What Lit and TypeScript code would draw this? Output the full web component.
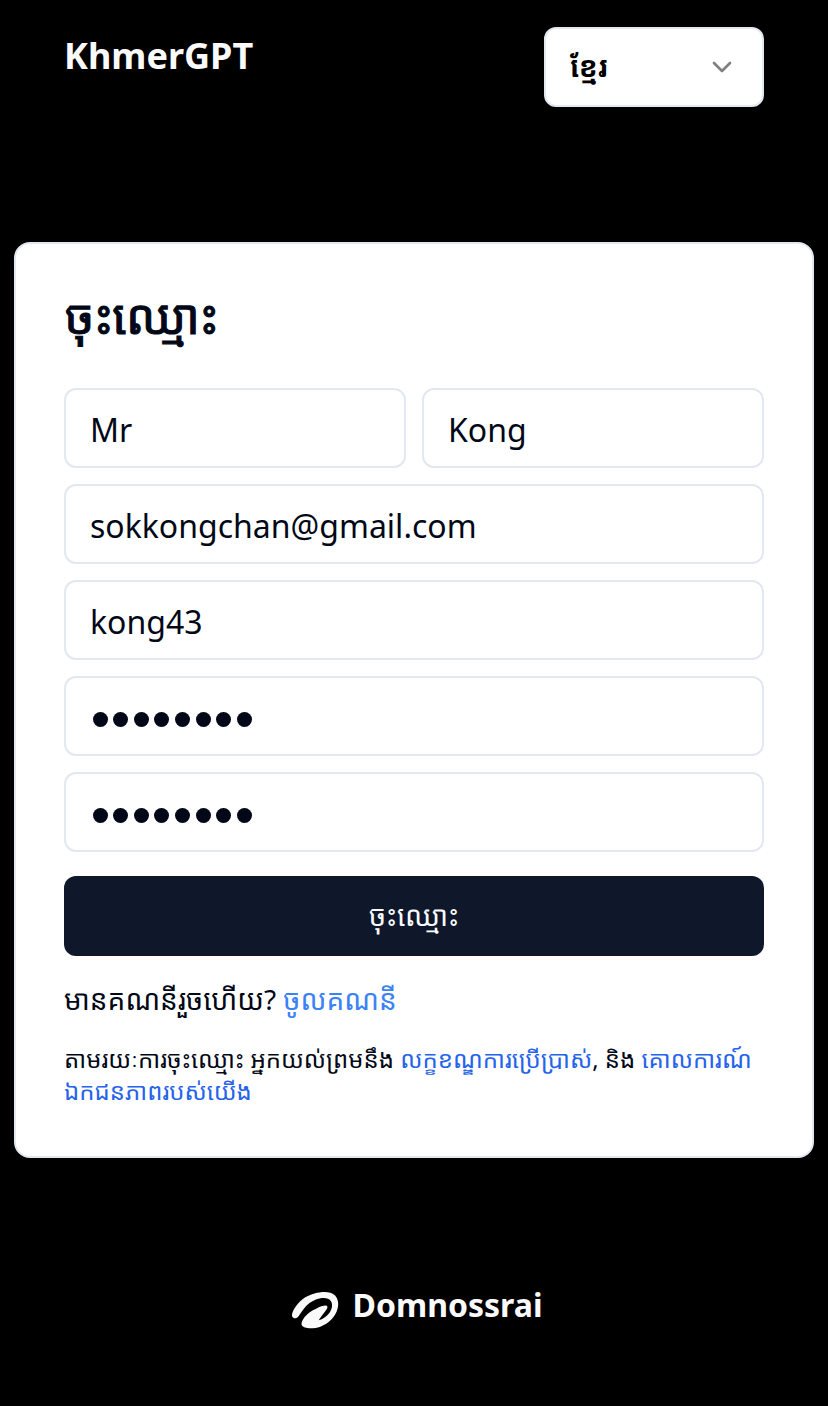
import { LitElement, html, css } from "lit";
import { customElement } from "lit/decorators.js";

@customElement("app-root")
export class AppRoot extends LitElement {
  static styles = css`
    :host { display: block; min-height: 1406px; background: #000; color: #020817; font-family: "Noto Sans", "Noto Sans Khmer", sans-serif; }
    * { box-sizing: border-box; }
    .page { height: 1406px; display: flex; flex-direction: column; padding: 27px 14px 0; }
    .top { display: flex; justify-content: space-between; padding: 0 50px; height: 80px; }
    .brand { color: #fafafa; font-weight: 700; font-size: 36px; line-height: 58px; }
    .select { width: 220px; height: 80px; border: 2px solid #e2e8f0; border-radius: 12px; background: #fff; display: flex; align-items: center; justify-content: space-between; padding: 0 24px; font-size: 28px; font-weight: 700; color: #000; }
    .select span { padding-bottom: 2px; }
    .chev { width: 32px; height: 32px; color: #808080; }
    .card { margin-top: 135px; height: 916px; background: #fff; border: 2px solid #e2e8f0; border-radius: 16px; padding: 48px; }
    h1 { margin: 0; padding-left: 1px; font-size: 48px; line-height: 48px; font-weight: 400; -webkit-text-stroke: 1.1px #020817; letter-spacing: -0.75px; height: 96px; }
    .form { display: flex; flex-direction: column; gap: 16px; }
    .row { display: grid; grid-template-columns: 1fr 1fr; gap: 16px; }
    .field { height: 80px; border: 2px solid #e2e8f0; border-radius: 12px; padding: 2px 24px 0; font-size: 32px; display: flex; align-items: center; white-space: nowrap; }
    .dots { display: flex; gap: 5.57px; padding: 4px 0 0 2.8px; }
    .dot { width: 15px; height: 15px; border-radius: 50%; background: #020817; }
    .btn { margin-top: 8px; height: 80px; border: 0; border-radius: 12px; background: #0f172a; color: #f8fafc; font: inherit; font-size: 28px; padding: 0 0 2px 0; }
    .p1, .p2 { margin: 0; white-space: nowrap; }
    .p1 { margin-top: 23px; font-size: 28px; line-height: 40px; }
    .p2 { margin-top: 24px; font-size: 24px; line-height: 32px; }
    .a1 { color: #3b82f6; } .a2 { color: #2563eb; }
    .foot { margin-top: 121px; padding-left: 5px; display: flex; justify-content: center; align-items: center; gap: 14px; color: #fafafa; font-size: 32px; font-weight: 700; height: 50px; }
    .logo { width: 48px; height: 40px; margin-top: 10px; }
  `;
  render() {
    const dots = html`<div class="field"><div class="dots">${Array.from({ length: 8 }, () => html`<i class="dot"></i>`)}</div></div>`;
    return html`<div class="page">
      <header class="top"><div class="brand">KhmerGPT</div><div class="select"><span>ខ្មែរ</span><svg class="chev" viewBox="0 0 24 24" fill="none" stroke="currentColor" stroke-width="2" stroke-linecap="round" stroke-linejoin="round"><path d="m6 9 6 6 6-6"/></svg></div></header>
      <main class="card"><h1>ចុះឈ្មោះ</h1>
        <div class="form"><div class="row"><div class="field">Mr</div><div class="field">Kong</div></div>
        <div class="field">sokkongchan@gmail.com</div><div class="field">kong43</div>${dots}${dots}
        <button class="btn">ចុះឈ្មោះ</button></div>
        <p class="p1">មានគណនីរួចហើយ? <span class="a1">ចូលគណនី</span></p>
        <p class="p2">តាមរយៈការចុះឈ្មោះ អ្នកយល់ព្រមនឹង <span class="a2">លក្ខខណ្ឌការប្រើប្រាស់</span>, និង <span class="a2">គោលការណ៍<br>ឯកជនភាពរបស់យើង</span></p>
      </main>
      <footer class="foot"><svg class="logo" viewBox="15 15 144 120" fill="#fafafa"><path d="M35 100C30 105 20 104 18 95C17 83 34 55 58 40C79 27 112 20 133 26C153 32 160 51 155 73C149 99 128 119 103 128C82 135 53 135 47 123C44 111 60 91 77 81C92 73 112 62 122 65C128 68 121 78 116 84C109 93 103 101 98 109C112 105 127 94 134 80C142 64 138 48 126 44C106 38 82 48 67 60C53 71 44 90 35 100Z"/></svg><span>Domnossrai</span></footer>
    </div>`;
  }
}
